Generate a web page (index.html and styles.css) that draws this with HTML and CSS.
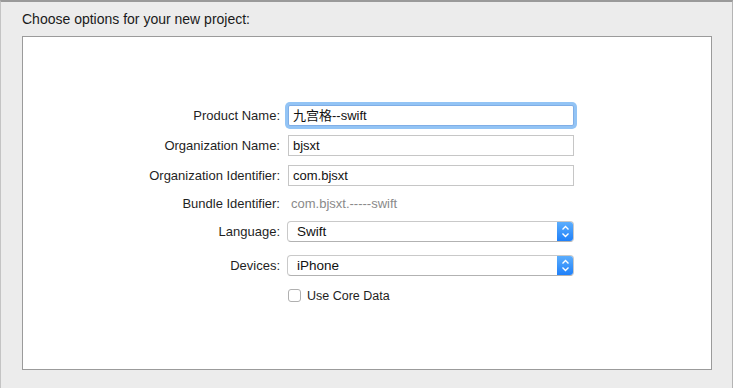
FILE: index.html
```html
<!DOCTYPE html>
<html lang="en">

<head>
    <meta charset="UTF-8">
    <title>Choose options for your new project</title>
    <link rel="stylesheet" href="styles.css">
</head>

<body>
    <div class="sheet">
        <div class="title">Choose options for your new project:</div>
        <div class="panel">
            <div class="form">
                <label class="label">Product Name:</label>
                <div class="field focus">九宫格--swift</div>

                <label class="label">Organization Name:</label>
                <div class="field">bjsxt</div>

                <label class="label">Organization Identifier:</label>
                <div class="field">com.bjsxt</div>

                <label class="label">Bundle Identifier:</label>
                <div class="plain">com.bjsxt.-----swift</div>

                <label class="label">Language:</label>
                <div class="popup">
                    <span class="popup-text">Swift</span>
                    <span class="arrows">
                        <svg width="17" height="21" viewBox="0 0 17 21">
                            <path d="M5.5 8.5 L8.5 5.5 L11.5 8.5" fill="none" stroke="#fff" stroke-width="1.4" />
                            <path d="M5.5 12.5 L8.5 15.5 L11.5 12.5" fill="none" stroke="#fff" stroke-width="1.4" />
                        </svg>
                    </span>
                </div>

                <label class="label">Devices:</label>
                <div class="popup">
                    <span class="popup-text">iPhone</span>
                    <span class="arrows">
                        <svg width="17" height="21" viewBox="0 0 17 21">
                            <path d="M5.5 8.5 L8.5 5.5 L11.5 8.5" fill="none" stroke="#fff" stroke-width="1.4" />
                            <path d="M5.5 12.5 L8.5 15.5 L11.5 12.5" fill="none" stroke="#fff" stroke-width="1.4" />
                        </svg>
                    </span>
                </div>

                <span></span>
                <div class="check">
                    <span class="box"></span>
                    <span>Use Core Data</span>
                </div>
            </div>
        </div>
    </div>
</body>

</html>
```

FILE: styles.css
```css
* {
    margin: 0;
    padding: 0;
    box-sizing: border-box;
}

html,
body {
    height: 100%;
}

body {
    background-color: #ececec;
    font-family: "Liberation Sans", Arial, sans-serif;
    font-size: 13px;
    color: #222;
}

.sheet {
    height: 388px;
    border-top: 2px solid #9a9a9a;
    border-left: 1px solid #c4c4c4;
    border-right: 1px solid #b4b4b4;
}

.title {
    height: 34px;
    padding: 9px 0 0 21px;
    font-size: 14px;
    color: #1a1a1a;
}

.panel {
    margin-left: 21px;
    width: 690px;
    height: 334px;
    background-color: #fff;
    border: 1px solid #9b9b9b;
    padding-top: 63px;
}

.form {
    display: grid;
    grid-template-columns: 257px 286px;
    grid-template-rows: 30px 31px 29px 26px 31px 37px 23px;
    column-gap: 8px;
    align-items: center;
}

.label {
    text-align: right;
    color: #1f1f1f;
}

.field {
    height: 21px;
    border: 1px solid #c6c6c6;
    background-color: #fff;
    padding-left: 4px;
    line-height: 19px;
    color: #111;
}

.field.focus {
    border-color: #80aee6;
    box-shadow: 0 0 0 3px #93c4f5;
    border-radius: 2px;
    font-family: "Liberation Sans", "Noto Sans CJK SC", sans-serif;
}

.plain {
    color: #8a8a8a;
    padding-left: 3px;
}

.popup {
    display: flex;
    height: 21px;
    margin-left: -1px;
    border: 1px solid #c9c9c9;
    border-bottom-color: #b2b2b2;
    border-radius: 4px;
    background-color: #fff;
    overflow: hidden;
}

.popup-text {
    flex: 1;
    padding-left: 9px;
    line-height: 19px;
    font-size: 13.5px;
    color: #111;
}

.arrows {
    width: 17px;
    margin: -1px -1px -1px 0;
    background: linear-gradient(#5fb0fd, #1c7ef9);
}

.arrows svg {
    display: block;
}

.check {
    display: flex;
    align-items: center;
    gap: 6px;
    font-size: 12.5px;
    color: #1e1e1e;
}

.check .box {
    width: 13px;
    height: 13px;
    border: 1px solid #b0b0b0;
    border-radius: 3px;
    background-color: #fff;
}
```
